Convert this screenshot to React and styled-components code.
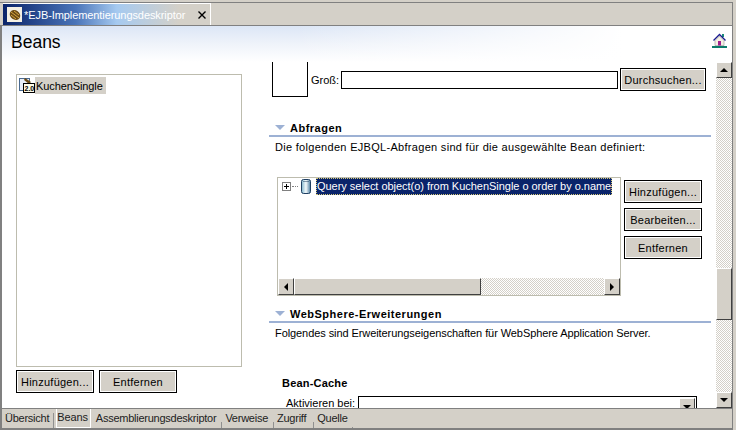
import React from "react";
import styled, { createGlobalStyle } from "styled-components";

const Global = createGlobalStyle`
  html, body { margin: 0; padding: 0; background: #d4d0c8; }
  * { box-sizing: border-box; }
  body { font-family: "Liberation Sans", Arial, sans-serif; font-size: 11px; color: #000; }
`;

const dither = `
  background: repeating-conic-gradient(#ffffff 0 25%, #d4d0c8 0 50%) 0 0 / 2px 2px;
`;

const Window = styled.div`
  width: 736px;
  height: 430px;
  display: flex;
  flex-direction: column;
  background: #d4d0c8;
  overflow: hidden;
`;
const TabStrip = styled.div`
  height: 23px;
  margin: 2px 3px 0 0;
  flex: none;
  display: flex;
  padding: 0 0 0 3px;
  border-right: 1px solid #808080;
  border-top: 1px solid #808080;
`;
const EditorTab = styled.div`
  width: 208px;
  height: 22px;
  display: flex;
  align-items: center;
  gap: 2px;
  padding-left: 4px;
  color: #fff;
  font-size: 11px;
  letter-spacing: -0.08px;
  white-space: nowrap;
  border-top: 1px solid #fff;
  border-right: 1px solid #fff;
  background: linear-gradient(to right, #0a246a 0%, #4a74b8 35%, #a6caf0 55%, #d4d0c8 85%);
`;
const TabIcon = styled.span`
  width: 15px;
  height: 15px;
  flex: none;
  background: #f4f0e4;
  display: flex;
  align-items: center;
  justify-content: center;
`;
const CloseGlyph = styled.svg`
  margin-left: 11px;
  flex: none;
`;
const Editor = styled.div`
  flex: 1;
  min-height: 0;
  margin-right: 3px;
  display: flex;
  flex-direction: column;
  background: #fff;
  border-left: 2px solid #808080;
  border-right: 1px solid #808080;
  border-top: 1px solid #808080;
`;
const Header = styled.div`
  height: 36px;
  flex: none;
  padding: 4px 0 0 9px;
  display: flex;
  justify-content: space-between;
  background:
    linear-gradient(to right, rgba(255, 255, 255, 0) 40%, #ffffff 85%),
    linear-gradient(to bottom, #dce6f6 0%, #eff3fa 50%, #ffffff 100%);
`;
const Title = styled.div`
  font-size: 17.5px;
  line-height: 24px;
  color: #000;
`;
const HomeIcon = styled.svg`
  margin: 3px 5px 0 0;
`;
const Body = styled.div`
  flex: 1;
  min-height: 0;
  display: flex;
`;
const LeftColumn = styled.div`
  width: 260px;
  flex: none;
  display: flex;
  flex-direction: column;
  padding: 12px 0 0 14px;
`;
const BeanList = styled.div`
  width: 226px;
  height: 293px;
  border: 1px solid #bdbcae;
  padding: 2px 1px;
`;
const BeanItem = styled.div`
  display: flex;
  align-items: flex-start;
  height: 17px;
  margin-left: 1px;
`;
const BeanLabel = styled.span`
  background: #d4d0c8;
  height: 17px;
  line-height: 18px;
  padding: 0 3px 0 1px;
  letter-spacing: -0.1px;
`;
const Button = styled.button`
  width: 78px;
  height: 23px;
  padding: 0;
  border: 1px solid #000;
  box-shadow: inset 1px 1px 0 #fff, inset -1px -1px 0 #fff;
  background: #d4d0c8;
  font: inherit;
  font-size: 11px;
  color: #000;
  letter-spacing: 0.25px;
`;
const ButtonRow = styled.div`
  display: flex;
  gap: 5px;
  margin-top: 3px;
`;
const RightColumn = styled.div`
  flex: 1;
  min-width: 0;
  overflow: hidden;
  display: flex;
  flex-direction: column;
  padding: 0 0 0 7px;
`;
const LogoRow = styled.div`
  height: 35px;
  flex: none;
  display: flex;
  align-items: flex-start;
  padding-left: 3px;
`;
const ImageBox = styled.div`
  width: 36px;
  height: 35px;
  border: 1px solid #000;
  border-top: none;
`;
const SmallLabel = styled.span`
  margin: 11px 0 0 3px;
  width: 30px;
  line-height: 15px;
`;
const TextInput = styled.div`
  width: 277px;
  height: 18px;
  margin-top: 9px;
  border: 1px solid #000;
  background: #fff;
`;
const BrowseButton = styled(Button)`
  width: 86px;
  margin: 6px 0 0 2px;
`;
const Section = styled.section`
  flex: none;
  margin-top: ${(p) => p.$top}px;
`;
const SectionHead = styled.div`
  display: flex;
  align-items: center;
  height: 15px;
  padding-left: 6px;
  font-weight: 700;
  font-size: 11px;
  letter-spacing: 0.5px;
  gap: 5px;
  color: #000;
`;
const Caret = styled.span`
  width: 0;
  height: 0;
  flex: none;
  border-left: 5px solid transparent;
  border-right: 5px solid transparent;
  border-top: 5px solid #9db1d4;
`;
const Rule = styled.div`
  height: 2px;
  width: 442px;
  background: #9db1d4;
`;
const Description = styled.div`
  padding: 3px 0 0 6px;
  line-height: 15px;
  white-space: nowrap;
  letter-spacing: ${(p) => p.$spacing}px;
`;
const QueryRow = styled.div`
  display: flex;
  margin: 22px 0 0 8px;
`;
const QueryTree = styled.div`
  width: 344px;
  height: 119px;
  flex: none;
  border: 1px solid #bdbcae;
  display: flex;
  flex-direction: column;
`;
const TreeArea = styled.div`
  flex: 1;
  display: flex;
  align-items: flex-start;
  padding: 0 0 0 4px;
`;
const Expander = styled.span`
  width: 9px;
  height: 9px;
  flex: none;
  margin-top: 4px;
  border: 1px solid #808080;
  display: flex;
  align-items: center;
  justify-content: center;
`;
const Dots = styled.span`
  width: 6px;
  height: 1px;
  flex: none;
  margin: 8px 3px 0 1px;
  border-top: 1px dotted #808080;
`;
const CylinderIcon = styled.svg`
  flex: none;
  margin-top: 1px;
`;
const QueryLabel = styled.span`
  margin-left: 5px;
  height: 17px;
  line-height: 16px;
  padding: 0 1px;
  background: #0a246a;
  color: #fff;
  white-space: nowrap;
  outline: 1px dotted #d4c878;
  outline-offset: -1px;
  letter-spacing: -0.03px;
`;
const HScroll = styled.div`
  height: 17px;
  flex: none;
  display: flex;
  ${dither}
`;
const ArrowButton = styled.div`
  width: ${(p) => p.$w || 16}px;
  height: ${(p) => p.$h || 16}px;
  flex: none;
  display: flex;
  align-items: center;
  justify-content: center;
  background: #d4d0c8;
  border-top: 1px solid #fff;
  border-left: 1px solid #fff;
  border-right: 1px solid #404040;
  border-bottom: 1px solid #404040;
`;
const HThumb = styled(ArrowButton)`
  width: 187px;
  height: 17px;
`;
const HSpacer = styled.div`
  flex: 1;
`;
const Triangle = styled.span`
  width: 0;
  height: 0;
  ${(p) => p.$dir === "left" && "border-top: 4px solid transparent; border-bottom: 4px solid transparent; border-right: 4px solid #000;"}
  ${(p) => p.$dir === "right" && "border-top: 4px solid transparent; border-bottom: 4px solid transparent; border-left: 4px solid #000;"}
  ${(p) => p.$dir === "up" && "border-left: 4px solid transparent; border-right: 4px solid transparent; border-bottom: 4px solid #000;"}
  ${(p) => p.$dir === "down" && "border-left: 4px solid transparent; border-right: 4px solid transparent; border-top: 4px solid #000;"}
`;
const QueryButtons = styled.div`
  display: flex;
  flex-direction: column;
  gap: 5px;
  margin: 3px 0 0 3px;
`;
const SubHead = styled.div`
  margin: 34px 0 0 13px;
  font-weight: 700;
  line-height: 16px;
  letter-spacing: 0.2px;
`;
const ComboRow = styled.div`
  display: flex;
  margin: 5px 0 0 17px;
  flex: none;
`;
const ComboLabel = styled.span`
  width: 72px;
  line-height: 15px;
`;
const Combo = styled.div`
  width: 339px;
  height: 20px;
  flex: none;
  border: 1px solid #000;
  display: flex;
  justify-content: flex-end;
  padding: 1px;
`;
const VScroll = styled.div`
  flex: 1;
  width: 16px;
  display: flex;
  flex-direction: column;
  ${dither}
`;
const VThumb = styled(ArrowButton)`
  margin-top: 190px;
  height: 52px;
`;
const VSpacer = styled.div`
  flex: 1;
`;
const RightGutter = styled.div`
  width: 16px;
  flex: none;
  display: flex;
  flex-direction: column;
`;
const BottomTabs = styled.div`
  height: 22px;
  flex: none;
  margin-right: 3px;
  display: flex;
  align-items: flex-start;
  border-top: 1px solid #808080;
  border-left: 2px solid #808080;
  border-right: 1px solid #808080;
  border-bottom: 2px solid #808080;
`;
const PageTab = styled.div`
  height: 19px;
  line-height: 18px;
  padding: 0 ${(p) => p.$pad || 5}px 0 3px;
  white-space: nowrap;
  letter-spacing: -0.25px;
  color: #222;
  background: linear-gradient(#909090, #909090) right bottom / 1px ${(p) => p.$sep || 6}px no-repeat;
`;
const ActivePageTab = styled.div`
  height: 19px;
  line-height: 17px;
  margin: 0 2px;
  padding: 0 2px 0 0;
  white-space: nowrap;
  letter-spacing: -0.12px;
  color: #222;
  border: 1px solid #fff;
  border-top: none;
`;

const Bean = ({ size = 12 }) => (
  <svg width={size} height={size} viewBox="0 0 12 12">
    <ellipse cx="6" cy="6" rx="5.5" ry="4.6" transform="rotate(35 6 6)" fill="#6b4a16" />
    <path d="M2 3 L10 9 M2 6 L7 10 M5 2 L10 6" stroke="#d8a840" strokeWidth="1" />
  </svg>
);

const BeanNodeIcon = () => (
  <svg width="16" height="16" viewBox="0 0 16 16">
    <rect x="0.5" y="1.5" width="10" height="12" fill="#e8eef8" stroke="#4a6a90" />
    <path d="M6 1 L12 5 L10 7 L5 3 Z" fill="#6b4a16" />
    <rect x="4.5" y="6.5" width="11" height="9" fill="#fffbe8" stroke="#000" />
    <text x="5.5" y="14" fontSize="7" fontWeight="700" fontFamily="Liberation Sans, sans-serif" fill="#000">2.0</text>
  </svg>
);

const Cylinder = () => (
  <CylinderIcon width="10" height="15" viewBox="0 0 10 15">
    <defs>
      <linearGradient id="cyl" x1="0" x2="1" y1="0" y2="0">
        <stop offset="0" stopColor="#7fb4cc" />
        <stop offset="0.5" stopColor="#f4fafc" />
        <stop offset="1" stopColor="#4a7ca0" />
      </linearGradient>
    </defs>
    <rect x="0.5" y="0.5" width="9" height="14" rx="2" fill="url(#cyl)" stroke="#1f3f62" />
    <rect x="2" y="2" width="6" height="1" fill="#1f3f62" opacity="0.5" />
  </CylinderIcon>
);

const Home = () => (
  <HomeIcon width="15" height="15" viewBox="0 0 15 15">
    <rect x="10" y="1" width="2" height="3" fill="#1a8a78" />
    <path d="M1.5 7.5 L7.5 1.5 L13.5 7.5" fill="none" stroke="#1a1a90" strokeWidth="1.4" />
    <path d="M3 7.5 L7.5 3 L12 7.5 V12.5 H3 Z" fill="#f4f0e4" stroke="#808080" strokeWidth="0.5" />
    <rect x="6" y="8" width="3" height="4.5" fill="#a02090" />
    <rect x="0" y="13" width="15" height="2" fill="#0a7a6a" />
  </HomeIcon>
);

export default function App() {
  return (
    <Window>
      <Global />
      <TabStrip>
        <EditorTab>
          <TabIcon><Bean /></TabIcon>
          *EJB-Implementierungsdeskriptor
          <CloseGlyph width="8" height="8" viewBox="0 0 8 8">
            <path d="M0.5 0.5 L7.5 7.5 M7.5 0.5 L0.5 7.5" stroke="#000" strokeWidth="1.4" />
          </CloseGlyph>
        </EditorTab>
      </TabStrip>
      <Editor>
        <Header>
          <Title>Beans</Title>
          <Home />
        </Header>
        <Body>
          <LeftColumn>
            <BeanList>
              <BeanItem>
                <BeanNodeIcon />
                <BeanLabel>KuchenSingle</BeanLabel>
              </BeanItem>
            </BeanList>
            <ButtonRow>
              <Button>Hinzufügen...</Button>
              <Button>Entfernen</Button>
            </ButtonRow>
          </LeftColumn>
          <RightColumn>
            <LogoRow>
              <ImageBox />
              <SmallLabel>Groß:</SmallLabel>
              <TextInput />
              <BrowseButton>Durchsuchen...</BrowseButton>
            </LogoRow>
            <Section $top={23}>
              <SectionHead><Caret />Abfragen</SectionHead>
              <Rule />
              <Description $spacing={0.3}>Die folgenden EJBQL-Abfragen sind für die ausgewählte Bean definiert:</Description>
            </Section>
            <QueryRow>
              <QueryTree>
                <TreeArea>
                  <Expander>
                    <svg width="7" height="7" viewBox="0 0 7 7">
                      <path d="M1 3.5 H6 M3.5 1 V6" stroke="#000" strokeWidth="1" />
                    </svg>
                  </Expander>
                  <Dots />
                  <Cylinder />
                  <QueryLabel>Query select object(o) from KuchenSingle o order by o.name</QueryLabel>
                </TreeArea>
                <HScroll>
                  <ArrowButton $h={17}><Triangle $dir="left" /></ArrowButton>
                  <HThumb />
                  <HSpacer />
                  <ArrowButton $h={17}><Triangle $dir="right" /></ArrowButton>
                </HScroll>
              </QueryTree>
              <QueryButtons>
                <Button>Hinzufügen...</Button>
                <Button>Bearbeiten...</Button>
                <Button>Entfernen</Button>
              </QueryButtons>
            </QueryRow>
            <Section $top={10}>
              <SectionHead><Caret />WebSphere-Erweiterungen</SectionHead>
              <Rule />
              <Description $spacing={-0.08}>Folgendes sind Erweiterungseigenschaften für WebSphere Application Server.</Description>
            </Section>
            <SubHead>Bean-Cache</SubHead>
            <ComboRow>
              <ComboLabel>Aktivieren bei:</ComboLabel>
              <Combo><ArrowButton $h={17}><Triangle $dir="down" /></ArrowButton></Combo>
            </ComboRow>
          </RightColumn>
          <RightGutter>
            <VScroll>
              <ArrowButton><Triangle $dir="up" /></ArrowButton>
              <VThumb />
              <VSpacer />
              <ArrowButton><Triangle $dir="down" /></ArrowButton>
            </VScroll>
          </RightGutter>
        </Body>
      </Editor>
      <BottomTabs>
        <PageTab $sep={15}>Übersicht</PageTab>
        <ActivePageTab>Beans</ActivePageTab>
        <PageTab $pad={6}>Assemblierungsdeskriptor</PageTab>
        <PageTab $pad={6}>Verweise</PageTab>
        <PageTab $pad={8}>Zugriff</PageTab>
        <PageTab $sep={1}>Quelle</PageTab>
      </BottomTabs>
    </Window>
  );
}
